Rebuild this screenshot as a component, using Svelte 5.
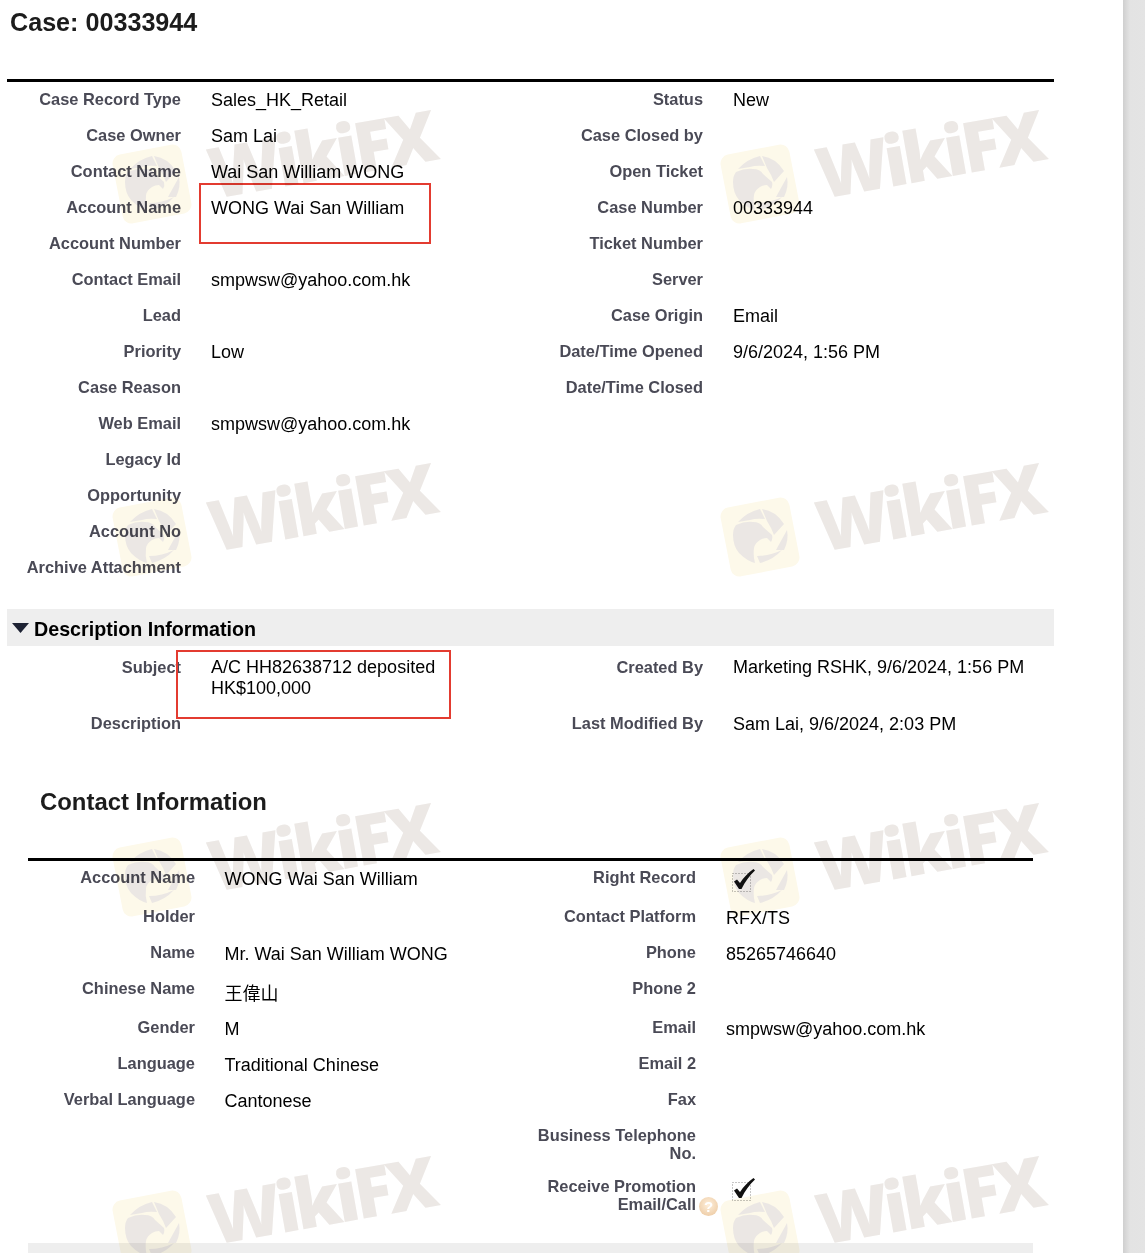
<script>
  // case detail page, two field tables plus the diagonal watermark tiles
  const caseRows = [
    ['Case Record Type', 'Sales_HK_Retail', 'Status', 'New'],
    ['Case Owner', 'Sam Lai', 'Case Closed by', ''],
    ['Contact Name', 'Wai San William WONG', 'Open Ticket', ''],
    ['Account Name', 'WONG Wai San William', 'Case Number', '00333944'],
    ['Account Number', '', 'Ticket Number', ''],
    ['Contact Email', 'smpwsw@yahoo.com.hk', 'Server', ''],
    ['Lead', '', 'Case Origin', 'Email'],
    ['Priority', 'Low', 'Date/Time Opened', '9/6/2024, 1:56 PM'],
    ['Case Reason', '', 'Date/Time Closed', ''],
    ['Web Email', 'smpwsw@yahoo.com.hk', '', ''],
    ['Legacy Id', '', '', ''],
    ['Opportunity', '', '', ''],
    ['Account No', '', '', ''],
    ['Archive Attachment', '', '', '']
  ];
  const descRows = [
    ['Subject', 'A/C HH82638712 deposited HK$100,000', 'Created By', 'Marketing RSHK, 9/6/2024, 1:56 PM'],
    ['Description', '', 'Last Modified By', 'Sam Lai, 9/6/2024, 2:03 PM']
  ];
  const contactRows = [
    ['Account Name', 'WONG Wai San William', 'Right Record', 'check'],
    ['Holder', '', 'Contact Platform', 'RFX/TS'],
    ['Name', 'Mr. Wai San William WONG', 'Phone', '85265746640'],
    ['Chinese Name', '王偉山', 'Phone 2', ''],
    ['Gender', 'M', 'Email', 'smpwsw@yahoo.com.hk'],
    ['Language', 'Traditional Chinese', 'Email 2', ''],
    ['Verbal Language', 'Cantonese', 'Fax', ''],
    ['', '', 'Business Telephone No.', ''],
    ['', '', 'Receive Promotion Email/Call', 'check-help']
  ];
  const tiles = [];
  for (const top of [143, 496, 836, 1189]) {
    for (const left of [112, 720]) tiles.push({ left, top });
  }
  const isCjk = (s) => /[\u4e00-\u9fff]/.test(s);
</script>

{#snippet check()}
  <svg class="check" width="30" height="28" viewBox="0 0 30 28" aria-hidden="true">
    <rect x="6.5" y="8.5" width="18" height="18" fill="none" stroke="#8f8f8f" stroke-width="1" stroke-dasharray="1 2" />
    <path d="M8 16.5 L11 14.5 L14 18 C17.5 12.5 22 8 27.5 4 L29 5.5 C23.5 10.5 19 17 15.5 24 L13 24 Z" fill="#111" />
  </svg>
{/snippet}

{#snippet fieldRows(rows)}
  {#each rows as r}
    <div class="lbl">{r[0]}</div>
    <div class="val" class:cjk={isCjk(r[1])}>{r[1]}</div>
    <div class="lbl">{r[2]}</div>
    <div class="val">
      {#if r[3] === 'check'}
        {@render check()}
      {:else if r[3] === 'check-help'}
        <span class="help">?</span>
        {@render check()}
      {:else}
        {r[3]}
      {/if}
    </div>
  {/each}
{/snippet}

<div class="screen">
  <main class="page">
    <div class="marks" aria-hidden="true">
      {#each tiles as t}
        <div class="mark" style="left: {t.left}px; top: {t.top}px">
          <svg class="logo" width="82" height="84" viewBox="0 0 82 84">
            <rect x="5" y="6" width="70" height="70" rx="9" fill="#fdf9ea" transform="rotate(-11 40 41)" />
            <g fill="#ebe7e4">
              <path d="M18 26 Q27 16 40 13 L45 23 Q36 22 30 24 Z" />
              <path d="M42 13 Q56 15 64 28 L54 39 Q51 31 47 25 Z" />
              <path d="M67 34 Q69 44 64 54 L56 54 Z" />
              <path d="M62 54 Q53 64 40 67 L37 60 Q50 60 62 54 Z" />
              <path d="M16 29 Q25 25 33 26 Q40 26 43 31 L52 39 Q53 43 51 46 L47 42 Q43 42 40 44 Q35 47 34 52 Q33 60 35 67 Q27 65 19 57 Q13 50 13 39 Q13 33 16 29 Z" />
            </g>
          </svg>
          <span class="mark-text">WikiFX</span>
        </div>
      {/each}
    </div>

    <h1 class="title">Case: 00333944</h1>

    <section class="fields case">
      {@render fieldRows(caseRows)}
    </section>

    <div class="sec-bar">
      <svg width="17" height="10" viewBox="0 0 17 10" aria-hidden="true"><path d="M0 0 H17 L8.5 10 Z" fill="#1d2233" /></svg>
      <span class="sec-name">Description Information</span>
    </div>

    <section class="fields desc">
      {@render fieldRows(descRows)}
    </section>

    <h2 class="sub">Contact Information</h2>

    <section class="fields contact">
      {@render fieldRows(contactRows)}
    </section>
    <div class="foot-bar"></div>

    <div class="redbox box-a"></div>
    <div class="redbox box-b"></div>
  </main>
  <div class="strip"></div>
</div>

<style>
  :global(body) { margin: 0; background: #fff; }

  .screen { display: flex; width: 1145px; height: 1253px; overflow: hidden; font-family: "Liberation Sans", Arial, "Noto Sans CJK TC", sans-serif; color: #000; }
  .page { position: relative; width: 1123px; flex: none; background: #fff; padding: 0 0 0 7px; box-sizing: border-box; overflow: hidden; }
  .strip { flex: 1; background: linear-gradient(to right, #cfcfcf, #e3e3e3 7px, #e4e4e4); }

  /* watermark sits over everything and only darkens */
  .marks { position: absolute; inset: 0; z-index: 2; mix-blend-mode: multiply; pointer-events: none; }
  .mark { position: absolute; width: 82px; height: 84px; }
  .logo { display: block; }
  .mark-text { position: absolute; left: 102px; top: -1px; font-family: "Open Sans", sans-serif; font-weight: 800; font-size: 70px; line-height: 60px; letter-spacing: -4.3px; color: #ece8e5; transform: rotate(-10deg); transform-origin: left bottom; white-space: nowrap; }

  .title { position: relative; margin: 0; padding: 8px 0 0 3px; height: 79px; box-sizing: border-box; font-size: 25.15px; line-height: 28px; font-weight: 700; color: #1c1c1c; }

  .fields { position: relative; display: grid; }
  .lbl { padding-top: 8px; font-size: 16.4px; line-height: 18px; font-weight: 700; color: #4a4a56; text-align: right; }
  .val { position: relative; padding: 8px 0 0 30px; font-size: 18px; line-height: 21px; }
  .val.cjk { padding-top: 12px; }

  .case { grid-template-columns: 174px 322px 200px 351px; grid-auto-rows: 36px; width: 1047px; border-top: 3px solid #000; }

  .sec-bar { position: relative; display: flex; align-items: center; gap: 5px; height: 37px; margin-top: 23px; width: 1047px; padding-left: 5px; box-sizing: border-box; background: #eee; font-size: 19.7px; font-weight: 700; color: #000; }
  .sec-name { padding-top: 4px; }

  .desc { grid-template-columns: 174px 322px 200px 351px; grid-template-rows: 56px 40px; width: 1047px; }
  .desc .lbl { padding-top: 12px; }
  .desc .val { padding-top: 11px; }
  .desc .val:nth-child(n+5) { padding-top: 12px; }

  .sub { position: relative; margin: 0; padding: 46px 0 0 33px; height: 116px; box-sizing: border-box; font-size: 23.9px; line-height: 28px; font-weight: 700; color: #1c1c1c; }

  .contact { grid-template-columns: 167px 331px 170px 337px; grid-template-rows: 39px 36px 36px 39px 36px 36px 36px 51px 73px; width: 1005px; margin-left: 21px; border-top: 3px solid #000; }
  .contact .lbl { padding-top: 7px; }
  .contact .val:nth-child(4n+2) { padding-left: 29.5px; }

  .foot-bar { position: relative; width: 1005px; height: 10px; margin-left: 21px; background: #eee; }

  .check { position: absolute; left: 30px; top: 4px; }
  .help { position: absolute; left: 3px; top: 27px; width: 19px; height: 19px; border-radius: 50%; background: radial-gradient(circle at 50% 40%, #fff0dc, #e9c49a); color: #fff; font-size: 15px; line-height: 19px; font-weight: 700; text-align: center; }

  .redbox { position: absolute; border: 2px solid #e33b30; box-sizing: border-box; }
  .box-a { left: 199px; top: 183px; width: 232px; height: 61px; }
  .box-b { left: 176px; top: 650px; width: 275px; height: 69px; }
</style>
